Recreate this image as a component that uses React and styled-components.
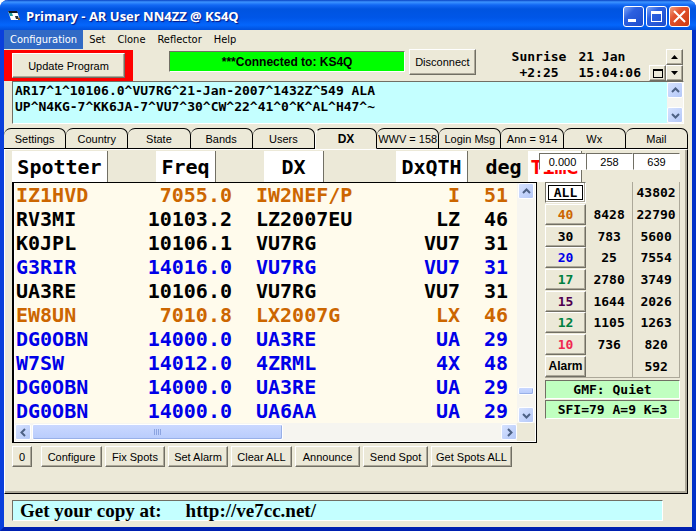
import styled, { createGlobalStyle } from "styled-components"

const GlobalStyle = createGlobalStyle`
  * {
    box-sizing: border-box;
  }

  body {
    margin: 0;
    background: #fff;
    font-family: "Liberation Sans", Arial, sans-serif;
    font-size: 11px;
    color: #000;
  }

  button,
  input,
  textarea {
    font: inherit;
    color: inherit;
    margin: 0;
    padding: 0;
    border-radius: 0;
  }
`

const mono = `
  font-family: "DejaVu Sans Mono", "Liberation Mono", monospace;
  font-weight: bold;
`

const Window = styled.div`
  min-height: 100vh;
  display: flex;
  flex-direction: column;
  background: #ece9d8;
  border: 4px solid #0a3fdc;
  border-top: 0;
  border-right-color: #0030c8;
  border-bottom-color: #0020b0;
  border-radius: 8px 8px 0 0;
`

const TitleBar = styled.header`
  height: 30px;
  margin: 0 -4px;
  padding: 5px 6px 3px 7px;
  display: flex;
  align-items: center;
  border-radius: 8px 8px 0 0;
  background: linear-gradient(
    #0842c4 0,
    #3c94ff 2px,
    #1268f4 5px,
    #0054e0 9px,
    #0056e8 18px,
    #0466fc 25px,
    #0050dc 30px
  );
`

const Title = styled.h1`
  margin: 0 auto 0 3px;
  font-family: "Open Sans", "Noto Sans", sans-serif;
  font-size: 13px;
  line-height: 20px;
  color: #fff;
  text-shadow: 1px 1px 1px #0a1883;
`

const WindowButtons = styled.div`
  display: flex;
  gap: 2px;
`

const WindowButton = styled.button`
  width: 21px;
  height: 21px;
  display: flex;
  border: 1px solid #fff;
  border-radius: 3px;
  background: ${({ $close }) =>
    $close
      ? "linear-gradient(135deg, #f0a080, #e25330 35%, #cc3a10)"
      : "linear-gradient(135deg, #7ea6f8, #2c60e0 35%, #1c4ccc)"};
`

const MenuBar = styled.nav`
  height: 19px;
  display: flex;
`

const MenuItem = styled.button`
  padding: 0 6px;
  border: 0;
  background: ${({ $active }) => ($active ? "#316ac5" : "transparent")};
  color: ${({ $active }) => ($active ? "#fff" : "#000")};
  font-family: "DejaVu Sans Condensed", "Noto Sans", sans-serif;
  font-size: 11px;
`

const TopRow = styled.section`
  height: 32px;
  display: flex;
  align-items: flex-start;
  padding-right: 9px;
`

const RedPanel = styled.div`
  width: 129px;
  height: 31px;
  margin-top: 1px;
  padding: 3px 8px;
  background: #f00;
`

const Button = styled.button`
  height: ${({ $height }) => $height || 21}px;
  padding: 0 5px;
  white-space: nowrap;
  background: #ece9d8;
  border: 1px solid;
  border-color: #fff #716f64 #716f64 #fff;
  box-shadow: inset -1px -1px #aca899;
`

const UpdateButton = styled(Button)`
  width: 113px;
`

const Connection = styled.input`
  flex: 1;
  min-width: 0;
  height: 21px;
  margin: 2px 4px 0 36px;
  border: 1px solid;
  border-color: #716f64 #fff #fff #716f64;
  background: #0f0;
  font-size: 12px;
  font-weight: bold;
  text-align: center;
`

const Clock = styled.div`
  ${mono}
  font-size: 13px;
  line-height: 16px;
  display: grid;
  grid-template-columns: auto auto;
  column-gap: 12px;
  margin: 0 8px 0 36px;
`

const ClockLabel = styled.span`
  text-align: center;
`

const Spinner = styled.div`
  display: grid;
  grid-template-columns: 17px 17px;
  grid-template-rows: 16px 16px;
`

const SmallButton = styled(Button)`
  height: 16px;
  padding: 0;
  display: flex;
  align-items: center;
  justify-content: center;
  grid-column: ${({ $column }) => $column};
`

const Message = styled.div`
  height: 43px;
  margin: 0 8px;
  display: flex;
  border: 1px solid;
  border-color: #716f64 #fff #fff #716f64;
  background: #c4ffff;
`

const MessageText = styled.textarea`
  ${mono}
  flex: 1;
  font-size: 13px;
  line-height: 16px;
  padding: 1px 2px;
  border: 0;
  outline: 0;
  resize: none;
  overflow: hidden;
  background: transparent;
`

const ScrollTrack = styled.div`
  display: flex;
  flex-direction: ${({ $horizontal }) => ($horizontal ? "row" : "column")};
  align-items: center;
  justify-content: space-between;
  background: #f6f5f0;
`

const ScrollButton = styled.button`
  width: 16px;
  height: 16px;
  flex: none;
  display: flex;
  align-items: center;
  justify-content: center;
  border: 1px solid #fff;
  border-radius: 2px;
  background: linear-gradient(135deg, #d6e2ff, #b4c8f8);
`

const ScrollCorner = styled.div`
  background: #ece9d8;
`

const TabBar = styled.div`
  height: 21px;
  margin: 4px 4px 0 0;
  display: grid;
  grid-template-columns: repeat(11, 1fr);
`

const Tab = styled.button`
  height: 21px;
  min-width: 0;
  overflow: hidden;
  white-space: nowrap;
  background: #ece9d8;
  border: 1px solid #000;
  border-left-color: ${({ $active }) => ($active ? "#fff" : "#000")};
  border-bottom-color: ${({ $active }) => ($active ? "#ece9d8" : "#000")};
  border-left-width: ${({ $active }) => ($active ? 1 : 0)}px;
  border-radius: 7px 7px 0 0;
  font-size: ${({ $active }) => ($active ? 12 : 11)}px;
  font-weight: ${({ $active }) => ($active ? "bold" : "normal")};
`

const TabPanel = styled.main`
  flex: 1;
  margin-right: 4px;
  padding: 1px 7px 0;
  display: flex;
  gap: 8px;
  border: 1px solid;
  border-color: #fff #000 #000 #fff;
  box-shadow: inset -2px -2px #aca899;
`

const Spots = styled.section`
  flex: 1;
  min-width: 0;
`

const HeaderRow = styled.div`
  height: 31px;
  display: flex;
`

const HeaderButton = styled.button`
  ${mono}
  flex: none;
  width: ${({ $width }) => $width}px;
  margin-right: ${({ $gap }) => $gap}px;
  border: 0;
  border-right: 1px solid ${({ $plain }) => ($plain ? "transparent" : "#716f64")};
  background: ${({ $plain }) => ($plain ? "transparent" : "#fff")};
  color: ${({ $color }) => $color || "#000"};
  font-size: 20px;
  white-space: nowrap;
`

const SpotBox = styled.div`
  display: grid;
  grid-template-columns: 1fr 18px;
  grid-template-rows: auto 18px;
  padding: 0 1px 1px;
  border: 1px solid #000;
  border-left-width: 2px;
  background: #fff;
`

const SpotTable = styled.table`
  ${mono}
  width: 100%;
  table-layout: fixed;
  border-collapse: collapse;
  background: #fffbec;
  font-size: 20px;
  line-height: 24px;
`

const SpotRow = styled.tr`
  color: ${({ $color }) => $color};
`

const SpotCell = styled.td`
  width: ${({ $width }) => $width}px;
  height: 24px;
  padding: 0;
  padding-left: ${({ $indent }) => $indent || 0}px;
  text-align: ${({ $right }) => ($right ? "right" : "left")};
  white-space: nowrap;
`

const Thumb = styled.div`
  height: ${({ $horizontal }) => ($horizontal ? "16px" : "8px")};
  width: ${({ $horizontal }) => ($horizontal ? "50%" : "16px")};
  margin: ${({ $horizontal }) => ($horizontal ? "0 auto 0 1px" : "auto 0 12px")};
  display: flex;
  align-items: center;
  justify-content: center;
  border: 1px solid #fff;
  border-radius: 2px;
  background: linear-gradient(#cad8ff, #b8ccfc);
  box-shadow: inset -1px -1px #98b0e8;
`

const Actions = styled.div`
  margin-top: 3px;
  display: flex;
  gap: 3px;
`

const ActionButton = styled(Button)`
  width: ${({ $width }) => $width}px;
  padding: 0;
  margin-right: ${({ $gap }) => $gap || 0}px;
`

const Side = styled.aside`
  position: relative;
  flex: none;
  width: 135px;
  display: flex;
  flex-direction: column;
`

const Counters = styled.div`
  height: 17px;
  margin: 2px 0 12px -6px;
  display: grid;
  grid-template-columns: repeat(3, 1fr);
`

const Counter = styled.input`
  min-width: 0;
  border: 1px solid;
  border-color: #716f64 #fff #fff #716f64;
  background: #fff;
  text-align: center;
`

const BandTable = styled.table`
  ${mono}
  width: 100%;
  height: 196px;
  table-layout: fixed;
  border-collapse: collapse;
  border-bottom: 1px solid #aca899;
  font-size: 13px;
`

const BandCell = styled.td`
  padding: 0;
  height: 21px;
  text-align: center;
  border-right: 1px solid #aca899;
`

const BandHead = styled.th`
  width: 41px;
  height: 21px;
  padding: 0;
`

const BandButton = styled(Button)`
  width: 100%;
  padding: 0;
  color: ${({ $color }) => $color};
  font-family: ${({ $alarm }) =>
    $alarm ? '"Liberation Sans", Arial, sans-serif' : "inherit"};
  font-size: ${({ $alarm }) => ($alarm ? 12 : 13)}px;
  outline: ${({ $selected }) => ($selected ? "1px solid #000" : "0")};
  outline-offset: -4px;
  background: ${({ $selected }) => ($selected ? "#fff" : "#ece9d8")};
  border-color: ${({ $selected }) =>
    $selected ? "#716f64 #fff #fff #716f64" : "#fff #716f64 #716f64 #fff"};
`

const Condition = styled.div`
  ${mono}
  height: 19px;
  margin-top: ${({ $gap }) => $gap}px;
  border: 1px solid;
  border-color: #716f64 #fff #fff #716f64;
  background: #c0ffc0;
  font-size: 13px;
  line-height: 17px;
  text-align: center;
  white-space: nowrap;
`

const Footer = styled.footer`
  height: 21px;
  margin: 6px 29px 6px 8px;
  padding-left: 7px;
  display: flex;
  gap: 24px;
  border: 1px solid;
  border-color: #716f64 #fff #fff #716f64;
  background: #c4ffff;
  font-family: "Liberation Serif", "Times New Roman", serif;
  font-size: 19px;
  font-weight: bold;
  line-height: 19px;
`

const FooterLink = styled.a`
  color: inherit;
  text-decoration: none;
`

const BLUE = "#0000e8"
const ORANGE = "#cc6600"
const BLACK = "#000"

const spots = [
  ["IZ1HVD", "7055.0", "IW2NEF/P", "I", "51", ORANGE],
  ["RV3MI", "10103.2", "LZ2007EU", "LZ", "46", BLACK],
  ["K0JPL", "10106.1", "VU7RG", "VU7", "31", BLACK],
  ["G3RIR", "14016.0", "VU7RG", "VU7", "31", BLUE],
  ["UA3RE", "10106.0", "VU7RG", "VU7", "31", BLACK],
  ["EW8UN", "7010.8", "LX2007G", "LX", "46", ORANGE],
  ["DG0OBN", "14000.0", "UA3RE", "UA", "29", BLUE],
  ["W7SW", "14012.0", "4ZRML", "4X", "48", BLUE],
  ["DG0OBN", "14000.0", "UA3RE", "UA", "29", BLUE],
  ["DG0OBN", "14000.0", "UA6AA", "UA", "29", BLUE],
]

const bands = [
  ["ALL", "", "43802", BLACK],
  ["40", "8428", "22790", ORANGE],
  ["30", "783", "5600", BLACK],
  ["20", "25", "7554", BLUE],
  ["17", "2780", "3749", "#008040"],
  ["15", "1644", "2026", "#500050"],
  ["12", "1105", "1263", "#008040"],
  ["10", "736", "820", "#f02850"],
  ["Alarm", "", "592", BLACK],
]

const tabs = [
  "Settings",
  "Country",
  "State",
  "Bands",
  "Users",
  "DX",
  "WWV = 158",
  "Login Msg",
  "Ann = 914",
  "Wx",
  "Mail",
]

const actions = [
  ["0", 20, 6],
  ["Configure", 61],
  ["Fix Spots", 60],
  ["Set Alarm", 60],
  ["Clear ALL", 61],
  ["Announce", 65],
  ["Send Spot", 65],
  ["Get Spots ALL", 81],
]

const chevrons = {
  up: "M1 6 L4.5 2.5 L8 6",
  down: "M1 3 L4.5 6.5 L8 3",
  left: "M6 1 L2.5 4.5 L6 8",
  right: "M3 1 L6.5 4.5 L3 8",
}

const Scroller = ({ direction }) => (
  <ScrollButton aria-label={`Scroll ${direction}`}>
    <svg width="9" height="9" viewBox="0 0 9 9">
      <path
        d={chevrons[direction]}
        fill="none"
        stroke="#4d6185"
        strokeWidth="2"
      />
    </svg>
  </ScrollButton>
)

const AppIcon = () => (
  <svg width="16" height="16" viewBox="0 0 16 16">
    <path d="M1 3h9l3 9H4z" fill="#fff" />
    <path d="M1 3h9l1 2H2z" fill="#101828" />
    <path d="M2 5h3l1 3H3z" fill="#18a0a0" />
    <path d="M8 8h3l1 3H9z" fill="#203040" />
    <path d="M11 10h2v2h-2z" fill="#806030" />
  </svg>
)

const App = () => (
  <>
    <GlobalStyle />
    <Window>
      <TitleBar>
        <AppIcon />
        <Title>Primary - AR User NN4ZZ @ KS4Q</Title>
        <WindowButtons>
          <WindowButton aria-label="Minimize">
            <svg width="19" height="19" viewBox="0 0 19 19">
              <path d="M4 12h8v3H4z" fill="#fff" />
            </svg>
          </WindowButton>
          <WindowButton aria-label="Maximize">
            <svg width="19" height="19" viewBox="0 0 19 19">
              <path d="M4 4h11v11H4z M5 7v7h9V7z" fill="#fff" fillRule="evenodd" />
            </svg>
          </WindowButton>
          <WindowButton $close aria-label="Close">
            <svg width="19" height="19" viewBox="0 0 19 19">
              <path d="M4 4l11 11M15 4l-11 11" stroke="#fff" strokeWidth="2" />
            </svg>
          </WindowButton>
        </WindowButtons>
      </TitleBar>

      <MenuBar>
        <MenuItem $active>Configuration</MenuItem>
        <MenuItem>Set</MenuItem>
        <MenuItem>Clone</MenuItem>
        <MenuItem>Reflector</MenuItem>
        <MenuItem>Help</MenuItem>
      </MenuBar>

      <TopRow>
        <RedPanel>
          <UpdateButton $height={25}>Update Program</UpdateButton>
        </RedPanel>
        <Connection
          aria-label="Connection"
          value="***Connected to: KS4Q"
          readOnly
        />
        <Button $height={26}>Disconnect</Button>
        <Clock>
          <ClockLabel>Sunrise</ClockLabel>
          <span>21 Jan</span>
          <ClockLabel>+2:25</ClockLabel>
          <span>15:04:06</span>
        </Clock>
        <Spinner>
          <SmallButton $column={2} aria-label="Later">
            <svg width="7" height="4" viewBox="0 0 7 4">
              <path d="M0 4L3.5 0L7 4z" />
            </svg>
          </SmallButton>
          <SmallButton $column={1} aria-label="Window">
            <svg width="10" height="9" viewBox="0 0 10 9">
              <path d="M0 0h10v9H0z M1 2v6h8V2z" fillRule="evenodd" />
            </svg>
          </SmallButton>
          <SmallButton $column={2} aria-label="Earlier">
            <svg width="7" height="4" viewBox="0 0 7 4">
              <path d="M0 0L3.5 4L7 0z" />
            </svg>
          </SmallButton>
        </Spinner>
      </TopRow>

      <Message>
        <MessageText
          aria-label="Incoming messages"
          value={
            "AR17^1^10106.0^VU7RG^21-Jan-2007^1432Z^549 ALA\nUP^N4KG-7^KK6JA-7^VU7^30^CW^22^41^0^K^AL^H47^~"
          }
          readOnly
        />
        <ScrollTrack>
          <Scroller direction="up" />
          <Scroller direction="down" />
        </ScrollTrack>
      </Message>

      <TabBar role="tablist">
        {tabs.map((name) => (
          <Tab
            key={name}
            role="tab"
            aria-selected={name === "DX"}
            $active={name === "DX"}
          >
            {name}
          </Tab>
        ))}
      </TabBar>

      <TabPanel>
        <Spots>
          <HeaderRow>
            <HeaderButton $width={96} $gap={48}>Spotter</HeaderButton>
            <HeaderButton $width={60} $gap={48}>Freq</HeaderButton>
            <HeaderButton $width={60} $gap={72}>DX</HeaderButton>
            <HeaderButton $width={72} $gap={12}>DxQTH</HeaderButton>
            <HeaderButton $width={48} $gap={0} $plain>deg</HeaderButton>
            <HeaderButton $width={54} $gap={0} $color="#f00">Time</HeaderButton>
          </HeaderRow>
          <SpotBox>
            <SpotTable>
              <tbody>
                {spots.map(([spotter, freq, dx, qth, deg, color], i) => (
                  <SpotRow key={i} $color={color}>
                    <SpotCell $width={121} $indent={1}>{spotter}</SpotCell>
                    <SpotCell $width={96} $right>{freq}</SpotCell>
                    <SpotCell $width={132} $indent={24}>{dx}</SpotCell>
                    <SpotCell $width={96} $right>{qth}</SpotCell>
                    <SpotCell $indent={24}>{deg}</SpotCell>
                  </SpotRow>
                ))}
              </tbody>
            </SpotTable>
            <ScrollTrack>
              <Scroller direction="up" />
              <Thumb />
              <Scroller direction="down" />
            </ScrollTrack>
            <ScrollTrack $horizontal>
              <Scroller direction="left" />
              <Thumb $horizontal>
                <svg width="8" height="6" viewBox="0 0 8 6">
                  <path d="M0 0h1v6H0zM2 0h1v6H2zM4 0h1v6H4zM6 0h1v6H6z" fill="#8ca4e0" />
                </svg>
              </Thumb>
              <Scroller direction="right" />
            </ScrollTrack>
            <ScrollCorner />
          </SpotBox>
          <Actions>
            {actions.map(([name, width, gap]) => (
              <ActionButton key={name} $width={width} $gap={gap}>
                {name}
              </ActionButton>
            ))}
          </Actions>
        </Spots>

        <Side>
          <Counters>
            <Counter aria-label="Delay" value="0.000" readOnly />
            <Counter aria-label="Spots" value="258" readOnly />
            <Counter aria-label="Users" value="639" readOnly />
          </Counters>
          <BandTable>
            <tbody>
              {bands.map(([band, count, total, color]) => (
                <tr key={band}>
                  <BandHead scope="row">
                    <BandButton
                      $color={color}
                      $selected={band === "ALL"}
                      $alarm={band === "Alarm"}
                    >
                      {band}
                    </BandButton>
                  </BandHead>
                  <BandCell>{count}</BandCell>
                  <BandCell>{total}</BandCell>
                </tr>
              ))}
            </tbody>
          </BandTable>
          <Condition $gap={2}>GMF: Quiet</Condition>
          <Condition $gap={1}>SFI=79 A=9 K=3</Condition>
        </Side>
      </TabPanel>

      <Footer>
        <span>Get your copy at:</span>
        <FooterLink href="http://ve7cc.net/">http://ve7cc.net/</FooterLink>
      </Footer>
    </Window>
  </>
)

export default App
